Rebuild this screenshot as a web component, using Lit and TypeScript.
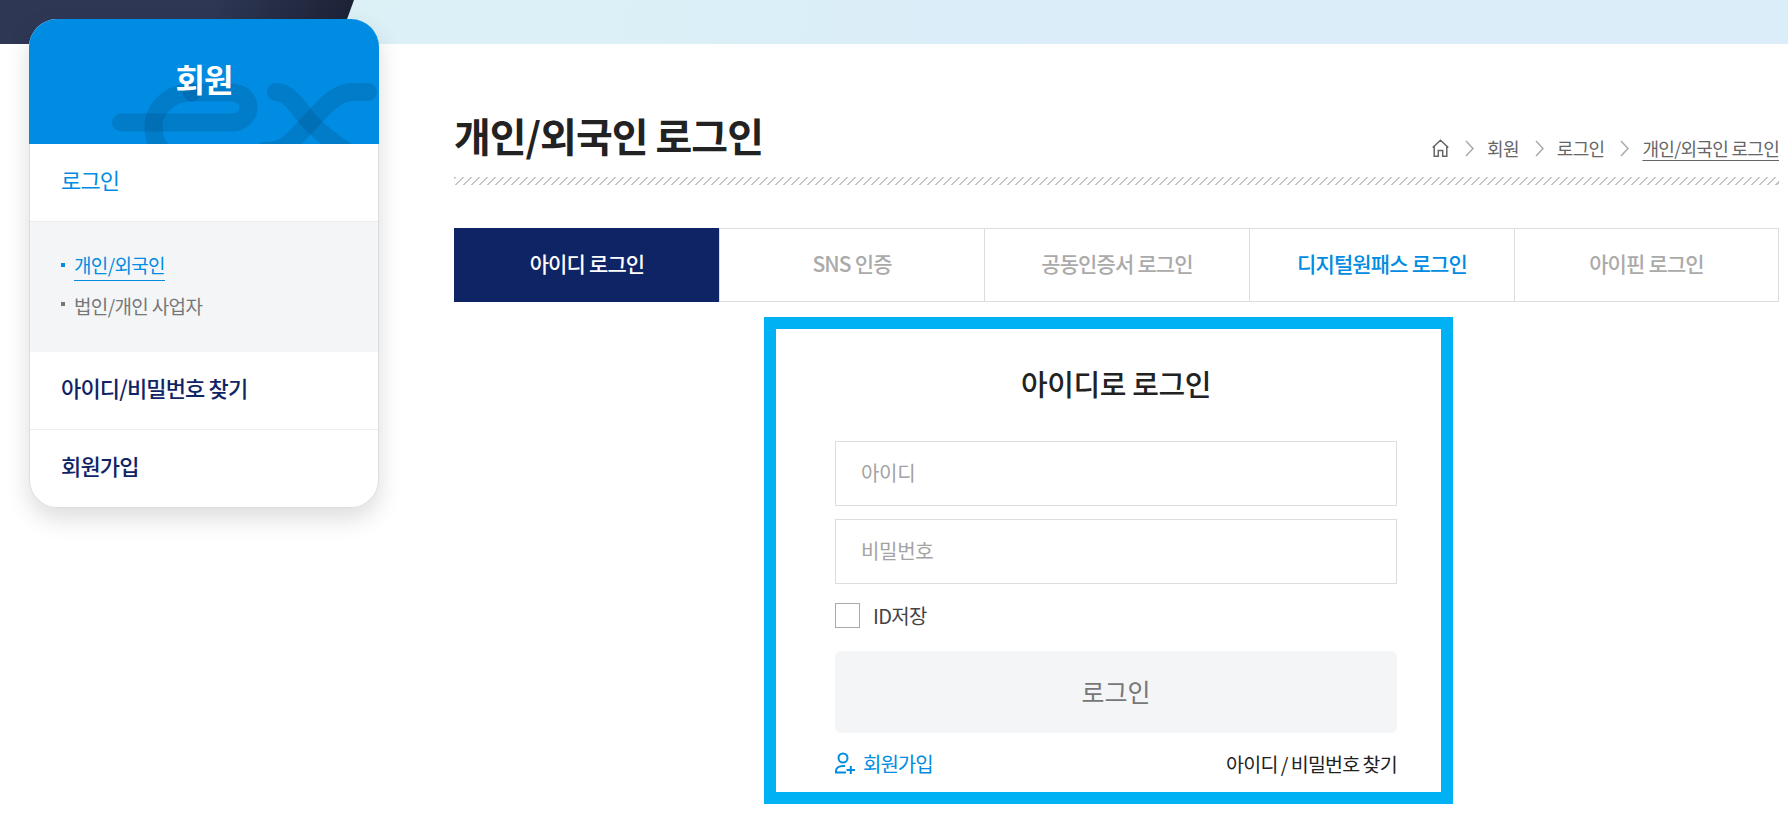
import { LitElement, html, css } from "lit";
import { customElement } from "lit/decorators.js";

const FONT = css`"Noto Sans CJK KR", "Noto Sans", sans-serif`;

@customElement("app-root")
export class AppRoot extends LitElement {
  static styles = css`
    :host { display: block; position: relative; width: 1788px; height: 821px; overflow: hidden; background: #fff; font-family: ${FONT}; color: #222; }
    * { box-sizing: border-box; }
    .top { height: 44px; background: linear-gradient(100deg, #dcf1f6 20%, #daedf9 60%); position: relative; }
    .top-dark { position: absolute; left: 0; top: 0; width: 354px; height: 44px; background: linear-gradient(90deg, #2e3754 60%, #1c2236); clip-path: polygon(0 0, 100% 0, 338px 100%, 0 100%); }
    .page { display: flex; align-items: flex-start; padding-left: 29px; margin-top: -25px; }
    .side { width: 350px; flex: none; position: relative; border-radius: 28px; box-shadow: 0 10px 24px rgba(0,0,0,.14); background: #fff; }
    .side-head { height: 125px; border-radius: 28px 28px 0 0; background: #008ce2; color: #fff; position: relative; overflow: hidden; display: flex; justify-content: center; padding-top: 36px; font-size: 32px; font-weight: 700; letter-spacing: -1px; line-height: 46px; }
    .side-head span { position: relative; }
    .side-head svg { position: absolute; left: 0; top: 0; }
    .side-body { border: 1px solid #ddd; border-top: 0; border-radius: 0 0 28px 28px; overflow: hidden; }
    .m { height: 78px; display: flex; align-items: center; padding: 0 0 8px 31px; font-size: 22px; font-weight: 500; color: #0f2465; letter-spacing: -.85px; border-bottom: 1px solid #eee; }
    .m.last { height: 77px; border-bottom: 0; }
    .m.on { color: #008ce2; font-weight: 400; }
    .sub { height: 130px; background: #f4f5f7; padding: 29px 0 0 31px; display: flex; flex-direction: column; gap: 9px; font-size: 19px; letter-spacing: -.65px; color: #777; }
    .sub div { display: flex; align-items: center; height: 30px; }
    .sub i { width: 4px; height: 4px; background: #777; margin: 0 9px 2px 0; }
    .sub .on { color: #008ce2; }
    .sub .on i { background: #008ce2; }
    .sub .on span { border-bottom: 1px solid #008ce2; line-height: 28px; height: 30px; }
    .main { margin-left: 75px; width: 1325px; }
    .title-row { display: flex; align-items: flex-start; justify-content: space-between; height: 158px; padding-top: 93px; }
    h1 { margin: 0; font-size: 40px; font-weight: 700; line-height: 46px; letter-spacing: -1px; color: #222; }
    .crumbs { display: flex; align-items: center; margin-top: 23px; font-size: 18px; line-height: 26px; color: #666; letter-spacing: -.7px; }
    .crumbs .chev { margin: 0 13px 0 16px; }
    .crumbs .last { text-decoration: underline; text-underline-offset: 4px; }
    .hatch { height: 8px; background: repeating-linear-gradient(135deg, #c4c4c4 0 1.6px, #fff 1.6px 5.66px); }
    .tabs { display: grid; grid-template-columns: repeat(5, 1fr); margin-top: 43px; height: 74px; }
    .tab { display: flex; align-items: center; justify-content: center; padding-bottom: 5px; border: 1px solid #ddd; border-right: 0; font-size: 21px; font-weight: 500; color: #aaa; letter-spacing: -.85px; }
    .tab:last-child { border-right: 1px solid #ddd; }
    .tab.on { background: #0f2465; color: #fff; border-color: #0f2465; }
    .tab.pass { color: #008ce2; }
    .box { width: 689px; height: 487px; margin: 15px 0 0 310px; border: 12px solid #00b2f3; padding: 0 44px 0 59px; }
    .box h2 { margin: 0; padding-top: 32px; text-align: center; font-size: 29px; font-weight: 500; line-height: 44px; letter-spacing: -.4px; color: #222; }
    .field { height: 65px; border: 1px solid #ddd; display: flex; align-items: center; padding: 0 0 2px 25px; font-size: 20px; color: #a3a3a3; letter-spacing: -.3px; }
    .f1 { margin-top: 36px; }
    .f2 { margin-top: 13px; }
    .save { display: flex; align-items: center; height: 25px; margin-top: 19px; font-size: 20px; color: #444; letter-spacing: -.7px; }
    .save i { width: 25px; height: 25px; border: 1px solid #aaa; margin-right: 13px; }
    .btn { height: 82px; margin-top: 23px; border-radius: 6px; background: #f4f5f7; display: flex; align-items: center; justify-content: center; padding-bottom: 3px; font-size: 25px; color: #777; }
    .links { display: flex; justify-content: space-between; align-items: center; height: 30px; margin-top: 15px; font-size: 20px; letter-spacing: -1px; }
    .join { display: flex; align-items: center; gap: 8px; color: #008ce2; }
    .find { color: #222; font-size: 19.500px; letter-spacing: -.75px; word-spacing: -.5px; }
  `;

  render() {
    return html`
      <div class="top"><div class="top-dark"></div></div>
      <div class="page">
        <aside class="side">
          <div class="side-head">
            <svg width="350" height="125" fill="none" stroke="#003a6b" stroke-opacity=".2" stroke-width="18" stroke-linecap="round">
              <path d="M92 103.500H203C213 103.500 219.500 96 219.500 88.500C219.500 81 213 73.500 203 73.500H163"/>
              <path d="M163 73.500C140 73.500 124.500 90 124.500 108C124.500 125 135 140 155 142"/>
              <path d="M247 73C262 73 270 92 281 103C295 117 305 125 322 135"/>
              <path d="M339 73H325C305 73 293 91 281 103C268 116 258 132 240 132H235"/>
            </svg>
            <span>회원</span>
          </div>
          <div class="side-body">
            <div class="m on">로그인</div>
            <div class="sub">
              <div class="on"><i></i><span>개인/외국인</span></div>
              <div><i></i><span>법인/개인 사업자</span></div>
            </div>
            <div class="m">아이디/비밀번호 찾기</div>
            <div class="m last">회원가입</div>
          </div>
        </aside>
        <main class="main">
          <div class="title-row">
            <h1>개인/외국인 로그인</h1>
            <div class="crumbs">
              <svg width="17" height="18" viewBox="0 0 17 18" fill="none" stroke="#666" stroke-width="1.5"><path d="M.7 8.500 8.500 1.200l7.800 7.300M2.200 7v10.200h4.100v-5.700h4.400v5.700h4.100V7"/></svg>
              ${this.chev()}<span>회원</span>${this.chev()}<span>로그인</span>${this.chev()}<span class="last">개인/외국인 로그인</span>
            </div>
          </div>
          <div class="hatch"></div>
          <div class="tabs">
            <div class="tab on">아이디 로그인</div>
            <div class="tab">SNS 인증</div>
            <div class="tab">공동인증서 로그인</div>
            <div class="tab pass">디지털원패스 로그인</div>
            <div class="tab">아이핀 로그인</div>
          </div>
          <section class="box">
            <h2>아이디로 로그인</h2>
            <div class="field f1">아이디</div>
            <div class="field f2">비밀번호</div>
            <div class="save"><i></i>ID저장</div>
            <div class="btn">로그인</div>
            <div class="links">
              <div class="join">
                <svg width="20" height="22" viewBox="0 0 20 22" fill="none" stroke="#008ce2" stroke-width="2"><circle cx="8" cy="6" r="4.500"/><path d="M1 20v-1c0-3 3-5 7-5h2M0 20.500h11M11.500 18H20M15.800 14v8"/></svg>
                회원가입
              </div>
              <div class="find">아이디 / 비밀번호 찾기</div>
            </div>
          </section>
        </main>
      </div>
    `;
  }

  chev() {
    return html`<svg class="chev" width="9" height="17" viewBox="0 0 9 17" fill="none" stroke="#aaa" stroke-width="1.5"><path d="M1 1l7 7.500-7 7.500"/></svg>`;
  }
}
